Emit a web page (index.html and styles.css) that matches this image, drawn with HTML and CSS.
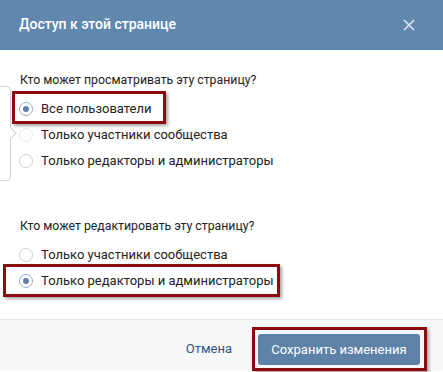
FILE: index.html
```html
<!DOCTYPE html>
<html lang="ru">
<head>
    <meta charset="UTF-8">
    <meta name="viewport" content="width=device-width, initial-scale=1.0">
    <title>Доступ к этой странице</title>
    <link rel="stylesheet" href="styles.css">
</head>
<body>
    <div class="modal">
        <div class="modal-header">
            <span class="modal-title">Доступ к этой странице</span>
            <svg class="close" width="12" height="12" viewBox="0 0 12 12">
                <path d="M1 1 L11 11 M11 1 L1 11"></path>
            </svg>
        </div>

        <div class="modal-body">
            <div class="group">
                <div class="group-title">Кто может просматривать эту страницу?</div>
                <div class="options">
                    <div class="option checked"><span class="radio"></span>Все пользователи</div>
                    <div class="option faded"><span class="radio"></span>Только участники сообщества</div>
                    <div class="option"><span class="radio"></span>Только редакторы и администраторы</div>
                </div>
            </div>

            <div class="group second">
                <div class="group-title">Кто может редактировать эту страницу?</div>
                <div class="options">
                    <div class="option"><span class="radio"></span>Только участники сообщества</div>
                    <div class="option checked"><span class="radio"></span>Только редакторы и администраторы</div>
                </div>
            </div>
        </div>

        <div class="modal-footer">
            <span class="cancel">Отмена</span>
            <button class="save">Сохранить изменения</button>
        </div>

        <!-- tooltip peeking in from the left edge -->
        <div class="tip"></div>

        <!-- red highlight frames drawn over the screenshot -->
        <div class="mark mark-view"></div>
        <div class="mark mark-edit"></div>
        <div class="mark mark-save"></div>
    </div>
</body>
</html>
```

FILE: styles.css
```css
* {
    margin: 0;
    padding: 0;
    box-sizing: border-box;
}

body {
    font-family: Roboto, "Liberation Sans", sans-serif;
    background-color: #fff;
    width: 443px;
    height: 372px;
    overflow: hidden;
}

.modal {
    position: relative;
    width: 443px;
    height: 372px;
    overflow: hidden;
}

.modal-header {
    height: 50px;
    background-color: #6087ae;
    display: flex;
    align-items: center;
    justify-content: space-between;
    padding: 0 28px 0 19px;
}

.modal-title {
    color: #fff;
    font-size: 14px;
    font-weight: 500;
    margin-top: -2px;
}

.close {
    margin-top: -1px;
}

.close path {
    stroke: #dbe3ec;
    stroke-width: 1.7;
    fill: none;
}

.modal-body {
    padding: 21px 20px 29px;
}

.group-title {
    font-size: 12.3px;
    line-height: 18px;
    color: #222;
}

.group.second {
    margin-top: 47px;
}

.options {
    display: flex;
    flex-direction: column;
    gap: 8px;
    margin-top: 11px;
}

.option {
    display: flex;
    align-items: center;
    font-size: 13px;
    line-height: 18px;
    color: #222;
}

.radio {
    width: 14px;
    height: 14px;
    border: 1px solid #c5d0db;
    border-radius: 50%;
    margin: 0 8px 0 -1px;
    display: flex;
    align-items: center;
    justify-content: center;
    background: #fff;
}

.option.faded .radio {
    border-color: #e8ecf0;
}

.option.checked .radio {
    border-color: #99aecb;
}

.option.checked .radio::after {
    content: "";
    width: 6px;
    height: 6px;
    border-radius: 50%;
    background-color: #5e81a8;
}

.modal-footer {
    border-top: 1px solid #e7e8ec;
    background-color: #f7f8fa;
    height: 52px;
    display: flex;
    align-items: flex-start;
    justify-content: flex-end;
    gap: 26px;
    padding: 14px 23px 0 0;
}

.cancel {
    color: #2a5885;
    font-size: 13px;
    line-height: 30px;
}

.save {
    font-family: inherit;
    width: 162px;
    height: 31px;
    border: none;
    border-radius: 3px;
    background-color: #5e81a8;
    color: #fff;
    font-size: 13px;
}

.tip {
    position: absolute;
    left: -100px;
    top: 86px;
    width: 111px;
    height: 95px;
    border: 1px solid #ccd4dc;
    border-radius: 4px;
    background: transparent;
}

.tip::after {
    content: "";
    position: absolute;
    right: -5px;
    top: 42px;
    width: 7px;
    height: 7px;
    background: #fff;
    border-top: 1px solid #ccd4dc;
    border-right: 1px solid #ccd4dc;
    transform: rotate(45deg);
}

.mark {
    position: absolute;
    border: 3px solid #8d0b0f;
    box-shadow: 2px 2px 3px rgba(0, 0, 0, 0.35);
}

.mark-view {
    left: 12px;
    top: 91px;
    width: 154px;
    height: 33px;
}

.mark-edit {
    left: 3px;
    top: 264px;
    width: 277px;
    height: 33px;
}

.mark-save {
    left: 252px;
    top: 327px;
    width: 175px;
    height: 44px;
}
```
